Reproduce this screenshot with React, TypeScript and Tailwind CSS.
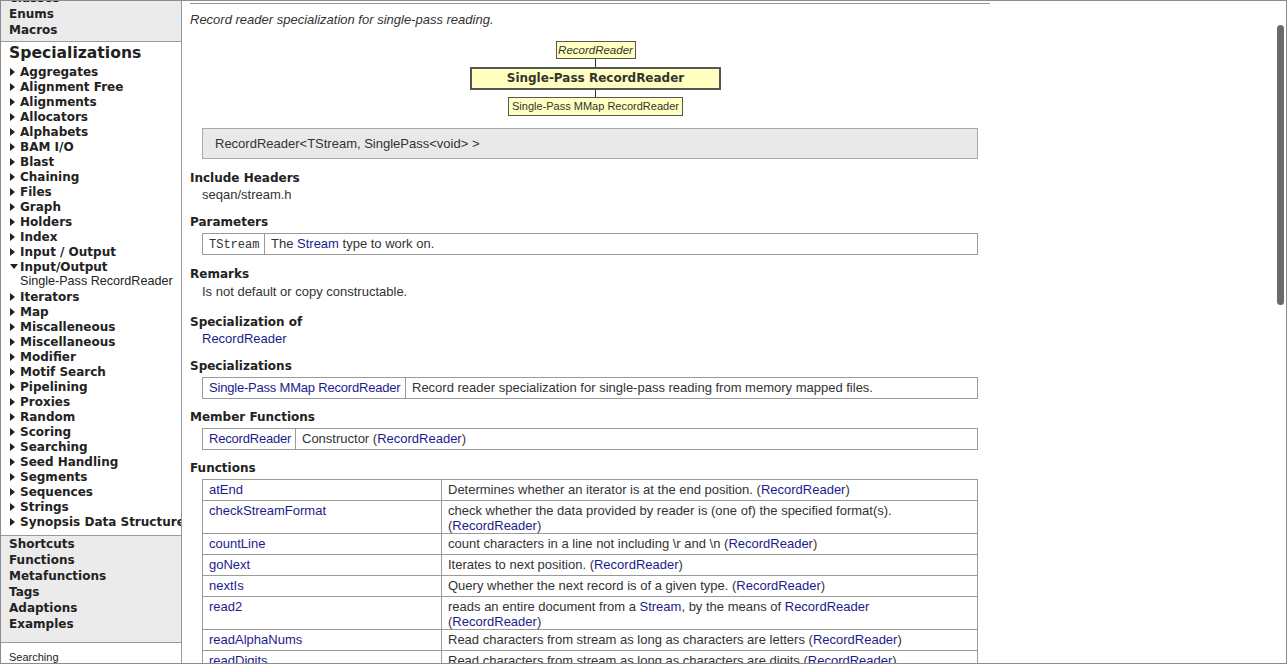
import React from 'react';

const LINK = 'text-[#1c1c8c]';

const groupsA = [
  'Aggregates', 'Alignment Free', 'Alignments', 'Allocators', 'Alphabets', 'BAM I/O', 'Blast',
  'Chaining', 'Files', 'Graph', 'Holders', 'Index', 'Input / Output',
];
const groupsB = [
  'Iterators', 'Map', 'Miscalleneous', 'Miscellaneous', 'Modifier', 'Motif Search', 'Pipelining',
  'Proxies', 'Random', 'Scoring', 'Searching', 'Seed Handling', 'Segments', 'Sequences', 'Strings',
  'Synopsis Data Structure',
];

const sans = { fontFamily: '"Liberation Sans", Arial, sans-serif' };
const bold = { fontFamily: '"DejaVu Sans", Verdana, sans-serif' };

const Arrow: React.FC<{ open?: boolean }> = ({ open }) => (
  <span className="w-[11px] shrink-0 flex items-center justify-start pl-[1px]">
    {open ? (
      <svg width="8" height="5" viewBox="0 0 8 5"><polygon points="0,0 8,0 4,5" fill="#222" /></svg>
    ) : (
      <svg width="5" height="8" viewBox="0 0 5 8"><polygon points="0,0 5,4 0,8" fill="#222" /></svg>
    )}
  </span>
);

const TreeItem: React.FC<{ label: string; open?: boolean }> = ({ label, open }) => (
  <div className="flex items-center h-[15px] whitespace-nowrap">
    <Arrow open={open} />
    <span>{label}</span>
  </div>
);

const Heading: React.FC<{ children: React.ReactNode; className?: string }> = ({ children, className }) => (
  <div className={`text-[12px] font-bold leading-[16px] text-[#222] ${className ?? ''}`} style={bold}>
    {children}
  </div>
);

const L: React.FC<{ children: React.ReactNode; className?: string }> = ({ children, className }) => (
  <span className={`${LINK} ${className ?? ''}`}>{children}</span>
);

type Row = [React.ReactNode, React.ReactNode];

// two-column doc table, first column has a fixed width
const DocTable: React.FC<{ rows: Row[]; first: string; className?: string }> = ({ rows, first, className }) => (
  <table className={`ml-3 w-[776px] table-fixed border-collapse text-[13px] leading-[15px] ${className ?? ''}`}>
    <tbody>
      {rows.map((r, i) => (
        <tr key={i}>
          <td className={`${first} h-[21px] whitespace-nowrap border border-[#9a9a9a] px-[6px] pt-[2px] pb-0 align-top`}>{r[0]}</td>
          <td className="h-[21px] border border-[#9a9a9a] px-[6px] pt-[2px] pb-0 align-top">{r[1]}</td>
        </tr>
      ))}
    </tbody>
  </table>
);

const functions: Row[] = [
  [<L>atEnd</L>, <>Determines whether an iterator is at the end position. (<L>RecordReader</L>)</>],
  [<L>checkStreamFormat</L>, <>check whether the data provided by reader is (one of) the specified format(s).<br />(<L>RecordReader</L>)</>],
  [<L>countLine</L>, <>count characters in a line not including \r and \n (<L>RecordReader</L>)</>],
  [<L>goNext</L>, <>Iterates to next position. (<L>RecordReader</L>)</>],
  [<L>nextIs</L>, <>Query whether the next record is of a given type. (<L>RecordReader</L>)</>],
  [<L>read2</L>, <>reads an entire document from a <L>Stream</L>, by the means of <L>RecordReader</L><br />(<L>RecordReader</L>)</>],
  [<L>readAlphaNums</L>, <>Read characters from stream as long as characters are letters (<L>RecordReader</L>)</>],
  [<L>readDigits</L>, <>Read characters from stream as long as characters are digits (<L>RecordReader</L>)</>],
  [<L>readFloat</L>, <>Read a floating point number from the stream. (<L>RecordReader</L>)</>],
];

export default function App() {
  return (
    <div className="relative w-[1287px] h-[664px] overflow-hidden bg-white border border-[#8c8c8c] flex text-[#333]" style={sans}>
      {/* sidebar */}
      <aside className="w-[181px] shrink-0 h-full border-r border-[#9a9a9a] flex flex-col overflow-hidden text-[#222]">
        <div className="bg-[#ebebeb] border-b border-[#9a9a9a] pl-[8px] pb-[3px]">
          <div className="-mt-[11px] text-[12px] font-bold leading-[16px]" style={bold}>
            <div>Classes</div>
            <div>Enums</div>
            <div>Macros</div>
          </div>
        </div>
        <div className="pl-[8px] pt-[2px] pb-[6px] border-b border-[#9a9a9a]">
          <div className="text-[15.6px] font-bold leading-[18px] whitespace-nowrap" style={bold}>Specializations</div>
          <div className="mt-[2px] text-[12px] font-bold" style={bold}>
            {groupsA.map((g) => <TreeItem key={g} label={g} />)}
            <TreeItem label="Input/Output" open />
            <div className="h-[15px] pl-[11px] flex items-center font-normal text-[12.6px] whitespace-nowrap" style={sans}>
              Single-Pass RecordReader
            </div>
            {groupsB.map((g) => <TreeItem key={g} label={g} />)}
          </div>
        </div>
        <div className="bg-[#ebebeb] border-b border-[#9a9a9a] pl-[8px] pb-[10px] text-[12px] font-bold leading-[16px]" style={bold}>
          <div>Shortcuts</div>
          <div>Functions</div>
          <div>Metafunctions</div>
          <div>Tags</div>
          <div>Adaptions</div>
          <div>Examples</div>
        </div>
        <div className="pl-[8px] pt-[7px] text-[11px] leading-[14px]">Searching</div>
      </aside>

      {/* main content */}
      <main className="flex-1 h-full overflow-hidden pl-[8px]">
        <div className="mt-[2px] h-px w-[800px] bg-[#999]" />
        <p className="mt-[8px] text-[13px] leading-[16px] italic">Record reader specialization for single-pass reading.</p>

        <div className="mt-[13px] w-[811px] flex flex-col items-center">
          <div className="w-[80px] h-[18px] border border-[#555] bg-[#ffffc0] text-[11.5px] italic leading-[16px] text-center">RecordReader</div>
          <div className="w-px h-[8px] bg-[#333]" />
          <div className="w-[251px] h-[23px] border-2 border-[#555] bg-[#ffffc0] text-[12px] font-bold leading-[19px] text-center" style={bold}>
            Single-Pass RecordReader
          </div>
          <div className="w-px h-[7px] bg-[#333]" />
          <div className="w-[175px] h-[19px] border border-[#555] bg-[#ffffc0] text-[11px] leading-[17px] text-center">
            Single-Pass MMap RecordReader
          </div>
        </div>

        <div className="mt-[12px] ml-3 w-[776px] h-[31px] border border-[#a8a8a8] bg-[#e9e9e9] pl-[12px] flex items-center text-[13px]">
          RecordReader&lt;TStream, SinglePass&lt;void&gt; &gt;
        </div>

        <Heading className="mt-[11px]">Include Headers</Heading>
        <div className="mt-[1px] ml-3 text-[13px] leading-[16px]">seqan/stream.h</div>

        <Heading className="mt-[11px]">Parameters</Heading>
        <DocTable
          className="mt-[3px]"
          first="w-[62px]"
          rows={[[<span className="text-[12px] text-[#333]" style={{ fontFamily: '"Liberation Mono", monospace' }}>TStream</span>, <>The <L>Stream</L> type to work on.</>]]}
        />

        <Heading className="mt-[11px]">Remarks</Heading>
        <div className="mt-[2px] ml-3 text-[13px] leading-[16px]">Is not default or copy constructable.</div>

        <Heading className="mt-[14px]">Specialization of</Heading>
        <div className="mt-[1px] ml-3 text-[13px] leading-[16px]"><L>RecordReader</L></div>

        <Heading className="mt-[11px]">Specializations</Heading>
        <DocTable
          className="mt-[3px]"
          first="w-[203px]"
          rows={[[<L className="tracking-[-0.2px]">Single-Pass MMap RecordReader</L>, 'Record reader specialization for single-pass reading from memory mapped files.']]}
        />

        <Heading className="mt-[10px]">Member Functions</Heading>
        <DocTable
          className="mt-[3px]"
          first="w-[93px]"
          rows={[[<L className="tracking-[-0.2px]">RecordReader</L>, <>Constructor (<L>RecordReader</L>)</>]]}
        />

        <Heading className="mt-[10px]">Functions</Heading>
        <DocTable className="mt-[3px]" first="w-[239px]" rows={functions} />
      </main>

      {/* overlay scrollbar */}
      <div className="absolute right-[2px] top-[24px] w-[7px] h-[280px] rounded-full bg-[#6b6b6b]" />
    </div>
  );
}
